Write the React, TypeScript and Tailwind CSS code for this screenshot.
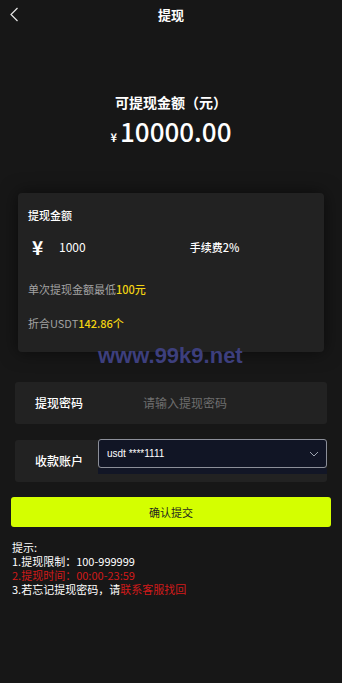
import React from 'react';

const font = { fontFamily: '"Noto Sans CJK SC", "Noto Sans", sans-serif' };

export default function App() {
  return (
    <div className="min-h-[683px] w-full bg-[#171717] text-white relative" style={font}>
      {/* header */}
      <div className="relative h-[30px] flex items-center justify-center">
        <svg className="absolute left-[9px] top-[7px] w-[10px] h-[15px]" viewBox="0 0 10 15" fill="none">
          <path d="M8.5 1 L2 7.5 L8.5 14" stroke="#e5e5e5" strokeWidth="1.2" />
        </svg>
        <span className="text-[13px] font-bold leading-[20px]">提现</span>
      </div>

      {/* balance */}
      <div className="mt-[62px] flex flex-col items-center">
        <div className="text-[14px] font-bold leading-[20px]">可提现金额（元）</div>
        <div className="mt-[4px] flex items-baseline leading-[30px]">
          <span className="text-[11px] font-bold mr-[3px]">¥</span>
          <span className="text-[26px] font-medium">10000.00</span>
        </div>
      </div>

      {/* amount card */}
      <div className="relative mt-[41px] mx-[18px]">
        <div className="bg-[#222222] rounded-[4px] shadow-[0_0_18px_rgba(0,0,0,0.55)] px-[10px] pt-[14px] pb-[21px]">
          <div className="text-[11px] font-medium leading-[16px]">提现金额</div>
          <div className="mt-[12px] flex items-center h-[24px]">
            <span className="ml-[4px] w-[27px] text-[19px] font-bold leading-[24px]">¥</span>
            <span className="text-[12px] leading-[16px]">1000</span>
            <span className="ml-[104px] text-[11px] font-medium leading-[16px]">手续费2%</span>
          </div>
          <div className="mt-[22px] text-[11px] leading-[16px] text-[#a3a3a3]">
            单次提现金额最低<span className="text-[#f2d312] font-medium">100元</span>
          </div>
          <div className="mt-[18px] text-[11px] leading-[16px] text-[#a3a3a3]">
            折合USDT<span className="text-[#f2d312] font-medium">142.86个</span>
          </div>
        </div>
        <div
          className="absolute left-[80px] top-[151px] text-[22px] font-bold leading-[24px] text-[#3d3f7d] whitespace-nowrap"
          style={{ fontFamily: '"Liberation Sans", Arial, sans-serif' }}
        >
          www.99k9.net
        </div>
      </div>

      {/* password */}
      <div className="mt-[30px] mx-[15px] h-[42px] bg-[#222222] rounded-[3px] flex items-center">
        <span className="ml-[20px] w-[108px] text-[12px] font-medium leading-[16px]">提现密码</span>
        <span className="text-[12px] leading-[16px] text-[#6e6e6e]">请输入提现密码</span>
      </div>

      {/* account */}
      <div className="mt-[16px] mx-[15px] h-[42px] bg-[#222222] rounded-[3px] flex items-start">
        <span className="ml-[20px] mt-[13px] w-[63px] text-[12px] font-medium leading-[16px]">收款账户</span>
        <div className="flex-1 -mt-[1px]">
          <div className="h-[29px] bg-[#111525] border border-[#8c8f99] rounded-[3px] flex items-center justify-between pl-[8px] pr-[7px]">
            <span className="text-[10px] leading-[14px]" style={{ fontFamily: '"Liberation Sans", Arial, sans-serif' }}>usdt ****1111</span>
            <svg className="w-[10px] h-[6px]" viewBox="0 0 10 6" fill="none">
              <path d="M1 1 L5 5 L9 1" stroke="#9ca3af" strokeWidth="1" />
            </svg>
          </div>
          <div className="h-[6px] bg-[#121626]" />
        </div>
      </div>

      {/* submit */}
      <div className="mt-[15px] mx-[11px] h-[30px] bg-[#d4ff00] rounded-[3px] flex items-center justify-center">
        <span className="text-[11px] leading-[16px] text-[#1f1f1f]">确认提交</span>
      </div>

      {/* tips */}
      <div className="mt-[13px] px-[12px] text-[11px] leading-[14px]">
        <div>提示:</div>
        <div>1.提现限制：100-999999</div>
        <div className="text-[#d11a1a]">2.提现时间：00:00-23:59</div>
        <div>
          3.若忘记提现密码，请<span className="text-[#d11a1a]">联系客服找回</span>
        </div>
      </div>
    </div>
  );
}
